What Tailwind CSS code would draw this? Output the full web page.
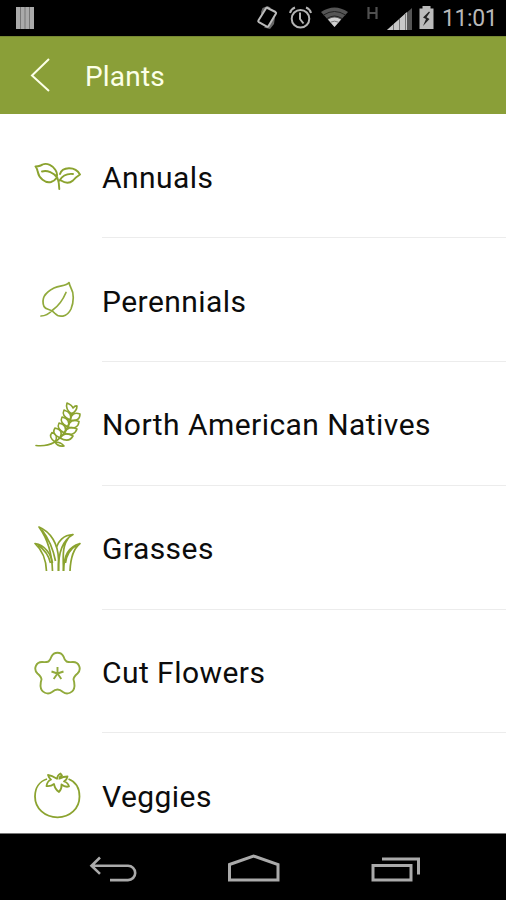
<!DOCTYPE html>
<html lang="en">
<head>
<meta charset="utf-8">
<title>Plants</title>
<script src="https://cdn.jsdelivr.net/npm/@tailwindcss/browser@4"></script>
</head>
<body class="w-[506px] h-[900px] overflow-hidden flex flex-col bg-white font-['Roboto',sans-serif]">
<header class="h-9 shrink-0 bg-black flex items-center justify-between pl-4">
  <svg class="w-[18px] h-[22px]" viewBox="0 0 18 22"><path fill="#aaa" d="M0 0h18v22H0z"/><path stroke="#777" stroke-width="1" d="M4.500 0v22M9 0v22M13.500 0v22"/></svg>
  <div class="flex items-center">
    <svg class="w-[180px] h-9" viewBox="255 0 180 36" fill="none">
      <path fill="#666" d="M261 12l1.500-4 5-2 3 1.500-8 14zM275 17l-1 7-4 5-6-1.500z"/>
      <path d="M267.500 8l8 4q1 .6.500 1.600l-7.500 12.500q-.6 1-1.600.5l-8-4.500q-1-.6-.5-1.600l7.500-12q.6-1 1.600-.5z" fill="#000" stroke="#bbb" stroke-width="2"/>
      <g stroke="#b4b4b4" stroke-width="2"><circle cx="300.500" cy="18.800" r="8.800"/><path d="M300 12.500v6.500l3.500 4.500M290 13q1-4 5-5.500M311 13q-1-4-5-5.500"/></g>
      <path fill="#555" d="M321 12q13.500-9 27 0L334.500 27z"/>
      <path stroke="#222" d="M323.500 15q11-7 22 0M327 18.500q7.500-5 15 0"/>
      <path fill="#d0d0d0" d="M328 19.500q6.500-4 13 0L334.500 27z"/>
      <path stroke="#777" d="M330.500 22.200q4-2 8 0"/>
      <path stroke="#505050" stroke-width="2.200" d="M368.500 7v12M376.500 7v12M368.500 13h8"/>
      <path fill="#555" d="M387 30L412 8v22z"/><path fill="#c8c8c8" d="M387 30L407 12v18z"/>
      <path stroke="#777" d="M393.500 24v6M399.500 19v11M405.500 14v16"/>
      <path fill="#bbb" d="M419.500 8.500h3v-2.500h8v2.500h3V29h-14z"/>
      <path fill="#222" d="M429 11.500l-6 6 3 1.500-3 7 6.500-7-3-1.800 3.500-5z"/>
    </svg>
    <span class="w-[71px] pl-[7px] pt-0.5 text-[23px] leading-9 text-[#b8b8b8] tracking-[-0.4px]">11:01</span>
  </div>
</header>
<div class="h-[78px] shrink-0 bg-[#8a9f38] border-t border-[#768833] flex items-center">
  <svg class="w-[22px] h-9 ml-[29px]" viewBox="29 58 22 36" fill="none" stroke="#fcffe8" stroke-width="2"><path d="M49 59L32 75.500 49 91"/></svg>
  <h1 class="ml-[34px] mt-0.5 text-[28px] leading-8 text-[#fcffe8] tracking-[0.2px]">Plants</h1>
</div>
<main class="h-[719px] shrink-0 overflow-hidden pt-[0.4px] text-[30px] text-[#0c0c0c] tracking-[0.45px]">
  <div class="h-[123.8px] flex items-center pl-[33px]">
    <svg class="size-12 shrink-0" viewBox="0 0 48 48" fill="none" stroke="#8ba32f" stroke-width="1.900" stroke-linecap="round" stroke-linejoin="round">
      <path d="M2.500 14.500Q8 14 9.500 12.500C14 10.500 20 13.500 22.500 18Q25 22 23.500 26Q22 28.500 18 30C12 31.500 6 26 4.800 20Q4.500 17 2.500 14.500zM9 19.500C14 18 21 20.500 24.500 26Q26 30 26.300 37M27 22C29 15 42 13.500 47 22.500Q43 25 40 28.500C36 32 31 30.500 28 28.500M40 22Q31 21 26.500 28.500"/>
    </svg>
    <div class="ml-[21px] flex-1 h-full border-b border-[#ececec] flex items-center pt-[3px]">Annuals</div>
  </div>
  <div class="h-[123.8px] flex items-center pl-[33px]">
    <svg class="size-12 shrink-0" viewBox="0 0 48 48" fill="none" stroke="#91aa3c" stroke-width="1.700" stroke-linecap="round" stroke-linejoin="round">
      <path d="M36 6.500C33 10.500 27 9 21 12C11 17 8.500 24 11 30.500C13 34.500 18 32.500 21.500 37C26 42 34 41.500 38 33C41 26 41 17 38 12Q36.500 9 36 6.500zM33 16.500C29 26 24 31 19.700 34Q14 40 8 40"/>
    </svg>
    <div class="ml-[21px] flex-1 h-full border-b border-[#ececec] flex items-center pt-[3px]">Perennials</div>
  </div>
  <div class="h-[123.8px] flex items-center pl-[33px]">
    <svg class="size-12 shrink-0" viewBox="0 -1 48 48" fill="none" stroke="#8ba32f" stroke-width="1.600" stroke-linecap="round" stroke-linejoin="round">
      <path d="M3 44.500Q14 45.500 21 41.500Q35 33 39 12"/>
      <path d="M38.500 13Q32 8 34 2Q39 4 40 7Q42 4.500 44 5Q44 10 38.500 13z"/>
      <path d="M37 19Q28 15 31 9Q40 12 37 19zM37 19Q39 10 47 13Q47 21 37 19z"/>
      <path d="M35 26Q26 22 29 16Q38 18 35 26zM35 26Q37 17 46 20.500Q45 29 35 26z"/>
      <path d="M31.500 32Q23 28 26 22Q35 24 31.500 32zM31.500 32Q35 24 44 28Q41 36 31.500 32z"/>
      <path d="M27 37Q18 33 22 27Q31 29 27 37zM27 37Q32 30 40 35Q36 42 27 37z"/>
      <path d="M22 41Q15 36 19 31.500Q26 34 22 41zM22 41Q28 41 31 45Q25 46 22 41z"/>
    </svg>
    <div class="ml-[21px] flex-1 h-full border-b border-[#ececec] flex items-center pt-[3px]">North American Natives</div>
  </div>
  <div class="h-[123.8px] flex items-center pl-[33px]">
    <svg class="size-12 shrink-0" viewBox="0 -1 48 48" fill="none" stroke="#8ba32f" stroke-width="1.700" stroke-linejoin="round">
      <path d="M19.500 46C19 27 14 13 6 2C18 7 25 19 25.500 34V46M9 5Q19 18 22.500 36"/>
      <path d="M25.500 46C25 28 30 15 40 9.500C30 10 25 17 23.500 22M37 11C29 20 30 30 30.500 46"/>
      <path d="M13.500 46C13 33 9 25 2 18.500C12 20 18 29 19.500 38M5 20Q15 27 17.500 38"/>
      <path d="M30.500 46C31 30 35 22 47 18.500C40 24 37.500 33 37 46M43 20.500Q34 26 32.500 38"/>
    </svg>
    <div class="ml-[21px] flex-1 h-full border-b border-[#ececec] flex items-center pt-[3px]">Grasses</div>
  </div>
  <div class="h-[123.8px] flex items-center pl-[33px]">
    <svg class="size-12 shrink-0" viewBox="0 -1 48 48" fill="none" stroke="#91aa3c" stroke-width="1.900" stroke-linejoin="round">
      <path d="M15.500 13.500Q17.500 11.500 18.500 8.500C21 3.500 28 3.500 30.500 8.500Q31.500 12 33.500 13.500Q36 14.500 40 14C46 14 49 21 44.500 25.500Q40.500 29 40.500 31.500Q41.500 34 41.500 38C41 45 34 47 30 44Q27 41.500 24.500 41.500T19 44C15 47 8 45 7.500 38Q7.500 34 8.500 31.500Q8.500 29 4.500 25.500C0 21 3 14 9 14Q13 14.500 15.500 13.500z"/>
      <path d="M24.500 25.500V19M24.500 25.500L18.500 23.500M24.500 25.500L30.500 23.500M24.500 25.500L20.700 31M24.500 25.500L28.300 31"/>
    </svg>
    <div class="ml-[21px] flex-1 h-full border-b border-[#ececec] flex items-center pt-[3px]">Cut Flowers</div>
  </div>
  <div class="h-[123.8px] flex items-center pl-[33px]">
    <svg class="size-12 shrink-0" viewBox="0 -0.500 48 48" fill="none" stroke="#8ba32f" stroke-width="1.800" stroke-linejoin="round">
      <path d="M14 7.500C6 10 2 17 2 25C2 37 12 45.800 24.500 45.800S46.500 37 46.500 25C46.500 16 42 10 35.500 7.500"/>
      <path d="M23.500 7Q19 4 15 3.500Q16 7 18 8Q14 10 13.500 14.500Q18 15 21 12.500Q22 18 26 20.500Q29 17 28.500 13Q32 16 36 15Q35 11 31 10Q34 8 34.500 5Q30 5 27 7M24 8Q24 4 27.500 2L29 4Q26 5 26.500 8"/>
    </svg>
    <div class="ml-[21px] flex-1 h-full flex items-center pt-[3px]">Veggies</div>
  </div>
</main>
<nav class="h-[67px] shrink-0 bg-black border-t border-[#777] flex items-center pl-[89px] pt-[3px]">
  <svg class="w-12 h-8" viewBox="89 852.500 48 32" fill="none" stroke="#aaa" stroke-width="2.600"><path d="M100 857l-8.500 8.200 8.500 8.200M91.500 865.200H128a7.200 7.200 0 0 1 0 14.400H110"/></svg>
  <svg class="w-[54px] h-8 ml-[90px]" viewBox="227 852.500 54 32" fill="none" stroke="#aaa" stroke-width="3"><path d="M229.500 864l24-8.500 24.500 8.500v15.500h-48.500z"/></svg>
  <svg class="w-[50px] h-8 ml-[90px]" viewBox="371 852.500 50 32" fill="none" stroke="#aaa" stroke-width="3"><path d="M373 865h38v14.500h-38zM382 858.500h36.500V874"/></svg>
</nav>
</body>
</html>
